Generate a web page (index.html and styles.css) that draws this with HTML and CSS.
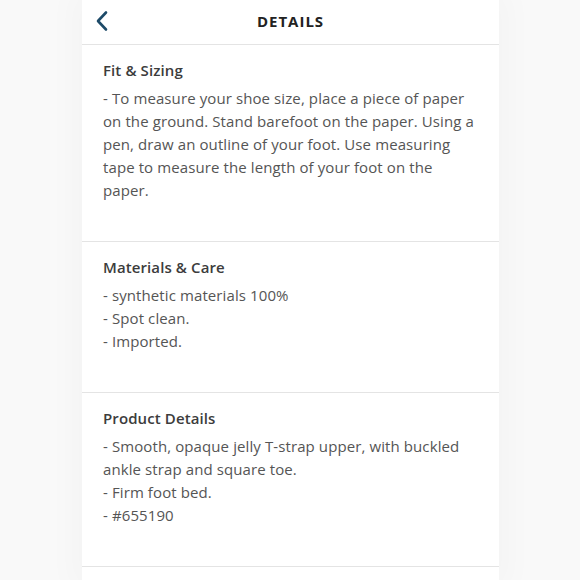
FILE: index.html
```html
<!DOCTYPE html>
<html>
<head>
<meta charset="utf-8">
<link rel="stylesheet" href="styles.css">
</head>
<body>
<div class="panel">
  <header class="topbar">
    <svg class="back" width="14" height="22" viewBox="0 0 14 22"><path d="M11 2.5 L3 11 L11 19.5" fill="none" stroke="#1d4a68" stroke-width="2.6" stroke-linecap="round" stroke-linejoin="round"/></svg>
    <h1 class="title">DETAILS</h1>
  </header>
  <section class="sec">
    <h2 class="head">Fit &amp; Sizing</h2>
    <p class="body">- To measure your shoe size, place a piece of paper on the ground. Stand barefoot on the paper. Using a pen, draw an outline of your foot. Use measuring tape to measure the length of your foot on the paper.</p>
  </section>
  <section class="sec">
    <h2 class="head">Materials &amp; Care</h2>
    <p class="body">- synthetic materials 100%<br>- Spot clean.<br>- Imported.</p>
  </section>
  <section class="sec">
    <h2 class="head">Product Details</h2>
    <p class="body">- Smooth, opaque jelly T-strap upper, with buckled ankle strap and square toe.<br>- Firm foot bed.<br>- #655190</p>
  </section>
</div>
</body>
</html>
```
FILE: styles.css
```css
html, body { margin: 0; padding: 0; }
body {
  background: #f9f9f9;
  font-family: "Open Sans", "Liberation Sans", sans-serif;
  height: 580px;
  overflow: hidden;
}
.panel {
  width: 417px;
  margin-left: 82px;
  background: #fff;
  min-height: 580px;
  box-shadow: 0 0 30px 10px rgba(0,0,0,0.025);
}
.topbar {
  position: relative;
  height: 44px;
  border-bottom: 1px solid #e4e4e4;
  display: flex;
  align-items: center;
  justify-content: center;
}
.back { position: absolute; left: 13px; top: 10px; }
.title {
  margin: -2px 0 0;
  font-size: 15px;
  font-weight: 700;
  letter-spacing: 1px;
  color: #222;
}
.sec {
  padding: 14px 21px 39px;
  border-bottom: 1px solid #e4e4e4;
}
.head {
  margin: 0;
  font-size: 15px;
  font-weight: 600;
  letter-spacing: 0.1px;
  color: #3c3c3c;
  line-height: 23px;
}
.body {
  margin: 5px 0 0;
  font-size: 15px;
  letter-spacing: 0.1px;
  line-height: 23px;
  color: #555;
}
```
